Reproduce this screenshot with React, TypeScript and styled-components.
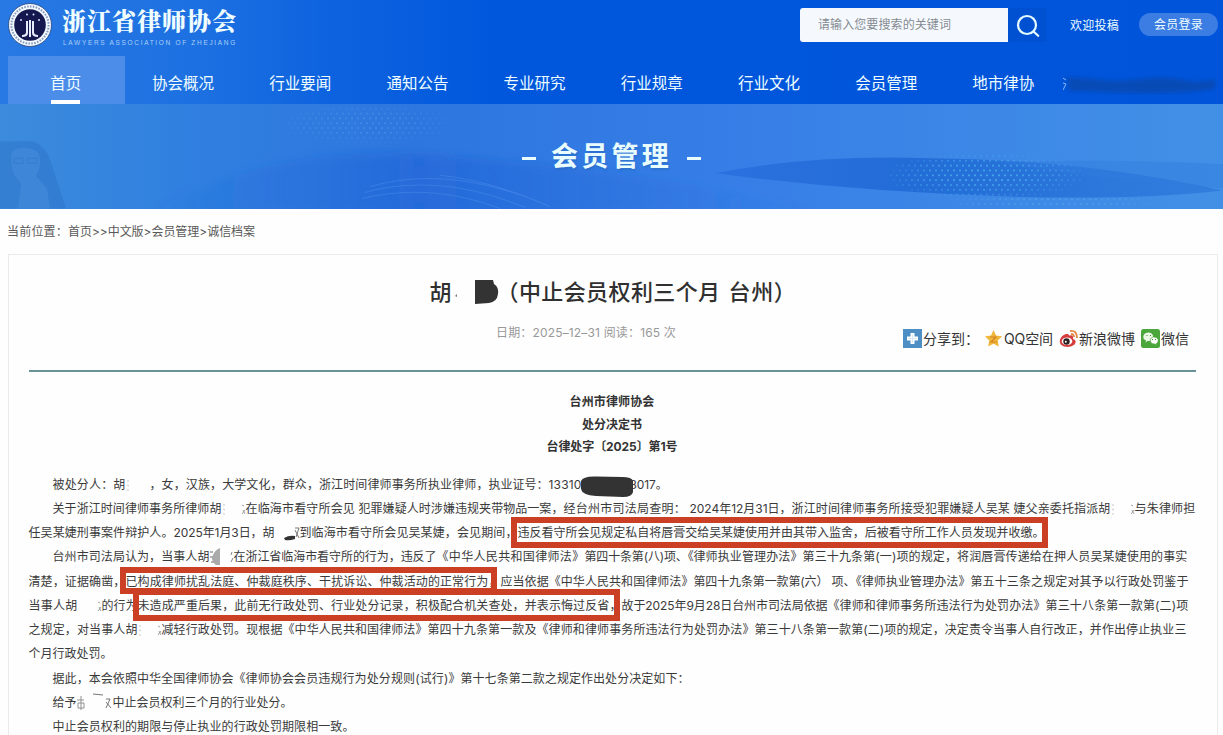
import React, { useLayoutEffect, useRef } from "react";
import styled, { createGlobalStyle, css } from "styled-components";

const GlobalStyle = createGlobalStyle`
  * { box-sizing: border-box; }
  body {
    margin: 0;
    background: #fefefe;
    color: #3a3a3a;
    font-family: Inter, "Noto Sans CJK SC", sans-serif;
    font-size: 12px;
    overflow: hidden;
  }
`;

const FitText = styled.span<{ $width: number; $gap?: number; $mark?: string }>`
  display: block;
  flex: none;
  width: ${(p) => p.$width}px;
  margin-left: ${(p) => p.$gap ?? 0}px;
  white-space: pre;
  ${(p) =>
    p.$mark &&
    css`
      position: relative;
      &::after {
        content: "";
        position: absolute;
        inset: ${p.$mark};
        border: 6px solid #cb4024;
      }
    `}
`;

type FitProps = { width: number; gap?: number; mark?: string; children: string };

/* Spreads its characters evenly over the given width. */
function Fit({ width, gap, mark, children }: FitProps) {
  const ref = useRef<HTMLSpanElement>(null);
  useLayoutEffect(() => {
    const el = ref.current;
    if (!el) return;
    el.style.letterSpacing = "0px";
    const natural = el.getBoundingClientRect().width;
    el.style.letterSpacing = `${(width - natural) / children.length}px`;
  }, [width, children]);
  return (
    <FitText $width={width} $gap={gap} $mark={mark}>
      <span ref={ref}>{children}</span>
    </FitText>
  );
}

const Page = styled.div`
  width: 1223px;
  height: 735px;
  overflow: hidden;
`;

const Header = styled.header`
  height: 104px;
  color: #effdff;
  background: linear-gradient(90deg, #2879e3 0, #1d70e1 200px, #0d63df 330px, #0057dc 500px, #0054da 100%);
`;

const TopBar = styled.div`
  display: flex;
  height: 56px;
  padding-left: 8px;
`;

const Emblem = styled.svg`
  width: 44px;
  height: 46px;
  margin-top: 2px;
`;

const Brand = styled.div`
  margin: 3px 0 0 10px;
  width: 738px;
`;

const BrandName = styled.div`
  font: 900 24px/34px "Noto Serif CJK SC", "Noto Serif SC", "Noto Sans CJK SC", serif;
`;

const BrandSub = styled.div`
  font: 6.5px/11px "Liberation Sans", sans-serif;
  color: #a9d0f8;
  padding-left: 1px;
`;

const SearchField = styled.div`
  width: 208px;
  height: 34px;
  margin-top: 8px;
  padding-left: 18px;
  border-radius: 3px 0 0 3px;
  background: #f5f9fe;
  color: #858b91;
  line-height: 34px;
  font-size: 12px;
`;

const SearchIcon = styled.svg`
  width: 38px;
  height: 34px;
  margin-top: 8px;
  background: #0051d1;
`;

const Submit = styled.div`
  margin: 9px 0 0 24px;
  line-height: 34px;
  width: 49px;
`;

const Login = styled.div`
  margin: 13px 0 0 20px;
  width: 79px;
  height: 23px;
  padding-left: 15px;
  border-radius: 12px;
  background: #3c7de3;
  line-height: 23px;
`;

const Nav = styled.nav`
  display: flex;
  height: 48px;
  padding-left: 8px;
`;

const NavItem = styled.div<{ $active?: boolean }>`
  display: flex;
  flex-direction: column;
  align-items: center;
  justify-content: space-between;
  width: 117.2px;
  padding: 12.5px 1.5px 0 0;
  flex: none;
  font-size: 15.5px;
  line-height: 29px;
  background: ${(p) => (p.$active ? "#4c8dea" : "transparent")};
`;

const ActiveBar = styled.i`
  width: 29px;
  height: 4px;
  background: #fff;
`;

const Blurred = styled.svg`
  width: 160px;
  height: 26px;
  margin-top: 15px;
`;

const Banner = styled.section`
  position: relative;
  display: flex;
  justify-content: center;
  align-items: center;
  height: 104.5px;
  background: linear-gradient(90deg, #3c8bdc 0, #3080e0 180px, #2e76df 420px, #377fe7 750px, #4290e6 100%);
  color: #e9fdff;
`;

const BannerArt = styled.svg`
  position: absolute;
  inset: 0;
  width: 100%;
  height: 100%;
`;

const BannerTitle = styled.h1`
  position: relative;
  display: flex;
  align-items: center;
  gap: 15px;
  margin: 0;
  padding-top: 2px;
  font-size: 27px;
  font-weight: 700;
  line-height: 40px;
  text-shadow: 1px 2px 2px #1d5ca655;
`;

const Dash = styled.i`
  width: 14px;
  height: 3px;
  margin-top: 2px;
  background: currentColor;
`;

const Crumb = styled.div`
  display: flex;
  height: 45.5px;
  padding-left: 7px;
  line-height: 45px;
  color: #595959;
`;

const Article = styled.main`
  width: 1210px;
  height: 500px;
  margin-left: 8px;
  padding: 0 21.5px 0 19.5px;
  border: 1px solid #e9ebe8;
`;

const Title = styled.h2`
  display: flex;
  align-items: center;
  margin: 16px 0 0 401px;
  height: 38px;
  font-size: 22px;
  font-weight: 500;
  color: #303030;
`;

const TitleBlot = styled.svg`
  width: 48px;
  height: 30px;
  flex: none;
`;

const Info = styled.div`
  display: flex;
  height: 62.5px;
  padding-left: 467.5px;
  border-bottom: 2px solid #6a9399;
  color: #999;
`;

const Meta = styled.div`
  width: 407px;
  padding-top: 12px;
  line-height: 24px;
`;

const Share = styled.div`
  display: flex;
  align-items: center;
  height: 29px;
  margin-top: 14.5px;
  font-size: 14px;
  color: #333;
`;

const ShareIcon = styled.svg<{ $gap?: number }>`
  width: 19px;
  height: 19px;
  flex: none;
  margin-left: ${(p) => p.$gap ?? 0}px;
  margin-right: 1px;
`;

const Heading = styled.div`
  display: flex;
  flex-direction: column;
  align-items: center;
  padding-top: 19.5px;
  height: 101px;
  font-weight: 700;
  line-height: 22.6px;
  color: #333;
`;

const Line = styled.p`
  display: flex;
  height: 24.27px;
  margin: 0;
  line-height: 24.27px;
  font-size: 12px;
`;

const Blot = styled.svg<{ $gap?: number; $w: number; $after?: number }>`
  flex: none;
  width: ${(p) => p.$w}px;
  height: 24px;
  overflow: visible;
  margin-left: ${(p) => p.$gap ?? 0}px;
  margin-right: ${(p) => p.$after ?? 0}px;
`;

/* The sliver of a stroke left at the edge of an erased name. */
const Trace = ({ w, left = true, right = true }: { w: number; left?: boolean; right?: boolean }) => (
  <Blot $w={w} viewBox={`0 0 ${w} 24`} fill="none" stroke="#8a8a8a" strokeWidth="0.8">
    {left && <path d="M1 8h2M1 12l2 1M1 17h2" opacity=".6" />}
    {right && <path d={`M${w - 4} 8l2 1M${w - 4} 17l3-4M${w - 3} 13l2 4`} />}
  </Blot>
);

const navItems: [string, number][] = [
  ["首页", 31],
  ["协会概况", 62],
  ["行业要闻", 62],
  ["通知公告", 62],
  ["专业研究", 62],
  ["行业规章", 62],
  ["行业文化", 62],
  ["会员管理", 62],
  ["地市律协", 62],
];

function dots(cx: number, cy: number, rx: number, ry: number, step: number) {
  const out: React.ReactElement[] = [];
  let row = 0;
  for (let y = cy - ry; y <= cy + ry; y += step * 0.8) {
    row += 1;
    for (let x = cx - rx; x <= cx + rx; x += step) {
      const d = ((x - cx) / rx) ** 2 + ((y - cy) / ry) ** 2;
      if (d < 1)
        out.push(<circle key={`${x}-${y}`} cx={x + (row % 2) * 3} cy={y} r="1.1" opacity={0.9 * (1 - d) + 0.15} />);
    }
  }
  return out;
}

export default function App() {
  return (
    <Page>
      <GlobalStyle />
      <Header>
        <TopBar>
          <Emblem viewBox="0 0 44 46">
            <circle cx="22" cy="23" r="21.5" fill="#f2f8ff" stroke="#24427c" strokeWidth=".8" />
            <circle cx="22" cy="23" r="18.6" fill="none" stroke="#8798b8" strokeWidth="2" strokeDasharray="1.6 1.3" />
            <circle cx="22" cy="23" r="15.8" fill="#14184f" />
            <path d="M18 19h2v12q0 4-6 4v-2q4 0 4-3zM21 18h2v17h-2zM24 19h2v11q0 3 4 3v2q-6 0-6-4z" fill="#e6ebfb" />
            <g fill="#dbe5ff">
              <circle cx="13" cy="18" r="1" />
              <circle cx="19" cy="12.500" r="1" />
              <circle cx="25.500" cy="12.500" r="1" />
              <circle cx="31" cy="18" r="1" />
            </g>
          </Emblem>
          <Brand>
            <BrandName>
              <Fit width={175}>浙江省律师协会</Fit>
            </BrandName>
            <BrandSub>
              <Fit width={174}>LAWYERS ASSOCIATION OF ZHEJIANG</Fit>
            </BrandSub>
          </Brand>
          <SearchField>
            <Fit width={133}>请输入您要搜索的关键词</Fit>
          </SearchField>
          <SearchIcon viewBox="0 0 38 34" fill="none" stroke="#e4fbff" strokeWidth="2.2">
            <circle cx="19" cy="17" r="9" />
            <path d="M25.500 23.500l4.700 4.300" strokeLinecap="round" />
          </SearchIcon>
          <Submit>
            <Fit width={49}>欢迎投稿</Fit>
          </Submit>
          <Login>
            <Fit width={49}>会员登录</Fit>
          </Login>
        </TopBar>
        <Nav>
          {navItems.map(([label, width], i) => (
            <NavItem key={label} $active={i === 0}>
              <Fit width={width}>{label}</Fit>
              {i === 0 && <ActiveBar />}
            </NavItem>
          ))}
          <Blurred viewBox="0 0 160 26">
            <defs>
              <filter id="soft"><feGaussianBlur stdDeviation="2" /></filter>
            </defs>
            <path d="M4 6q20 1 34 3t40-1 42 1 32-1v10q-30 4-60 4t-50-1-36-1z" fill="#0e449f" opacity=".6" filter="url(#soft)" />
            <path d="M0 7l3 2M0 12l3 1-3 6" stroke="#86b9f3" fill="none" />
          </Blurred>
        </Nav>
      </Header>

      <Banner>
        <BannerArt viewBox="0 0 1223 104" preserveAspectRatio="none">
          <defs>
            <linearGradient id="wave" x1="0" x2="1">
              <stop offset="0" stopColor="#1d5fd4" stopOpacity="0" />
              <stop offset=".4" stopColor="#1d5fd4" stopOpacity=".5" />
              <stop offset="1" stopColor="#2568d8" stopOpacity="0" />
            </linearGradient>
            <linearGradient id="leaf" x1="0" x2="1">
              <stop offset="0" stopColor="#2a6fde" />
              <stop offset=".4" stopColor="#1e68d4" />
              <stop offset="1" stopColor="#2f7bdc" />
            </linearGradient>
            <filter id="haze"><feGaussianBlur stdDeviation="5" /></filter>
          </defs>
          <path d="M150 110C230 60 330 42 450 52S690 72 820 110Z" fill="url(#wave)" filter="url(#haze)" />
          <path d="M715 69Q810 50 930 54Q1080 55 1223 86Q1130 96 1010 92Q860 88 715 69Z" fill="url(#leaf)" opacity=".85" />
          <path d="M1000 58Q1120 54 1223 60V84Q1110 77 1000 58Z" fill="#317cdd" opacity=".45" />
          <g fill="#42a5ea">{dots(985, 71, 100, 24, 6)}</g>
          <g fill="#58b3ec" opacity=".5">{dots(1050, 97, 110, 7, 6)}</g>
          <g fill="#58a9ea" opacity=".4">{dots(365, 20, 85, 20, 6)}</g>
          <g fill="none" stroke="#5c9cf0" opacity=".35">
            <path d="M370 82Q450 60 545 100M365 88Q440 68 525 103M362 94Q430 78 500 104M440 71Q490 76 550 102" />
          </g>
          <path d="M0 37h32q14 3 20 24l14 43H0z" fill="#2b71c4" opacity=".42" />
          <path d="M12 47q10-7 25 0 7 9-1 25l11 12 3 20H18l3-25Q8 66 12 47z" fill="#4a91e0" opacity=".45" />
          <path d="M14 54h9v5h-9zM28 54h9v5h-9z" fill="none" stroke="#2b71c4" opacity=".35" />
        </BannerArt>
        <BannerTitle>
          <Dash />
          <Fit width={121}>会员管理</Fit>
          <Dash />
        </BannerTitle>
      </Banner>

      <Crumb>
        <Fit width={61}>当前位置：</Fit>
        <Fit width={187}>{"首页>>中文版>会员管理>诚信档案"}</Fit>
      </Crumb>

      <Article>
        <Title>
          <Fit width={23}>胡</Fit>
          <TitleBlot viewBox="0 0 48 30">
            <path d="M2 21l2-2v3z" fill="#777" />
            <path d="M22 5h18l1 4q5 3 4 10-1 8-9 9l-14 1z" fill="#333" />
          </TitleBlot>
          <Fit width={224} gap={-4}>（中止会员权利三个月</Fit>
          <Fit width={68} gap={8}>台州）</Fit>
        </Title>
        <Info>
          <Meta>
            <Fit width={180}>日期：2025–12–31 阅读：165 次</Fit>
          </Meta>
          <Share>
            <ShareIcon viewBox="0 0 19 19">
              <path d="M0 0h19v19H0z" fill="#4d8fc5" />
              <path d="M9.500 4v11M4 9.500h11" stroke="#fff" strokeWidth="4" />
              <path d="M9.500 5.500v8M5.500 9.500h8" stroke="#d4e8f8" />
            </ShareIcon>
            <Fit width={56}>分享到：</Fit>
            <ShareIcon $gap={5} viewBox="0 0 19 19">
              <path d="M9.500 1l2.600 5.500 6 .8-4.300 4.300 1 6-5.300-2.900-5.300 2.900 1-6L1 7.300l6-.8z" fill="#f0b73d" />
              <path d="M6 8h6l-5 5h6" fill="none" stroke="#d18322" strokeWidth="1.200" />
            </ShareIcon>
            <Fit width={49}>QQ空间</Fit>
            <ShareIcon $gap={6} viewBox="0 0 19 19">
              <path d="M8 5Q4 5 1.500 9.500-1 15 5 17.500q7 1.500 10.500-2 3-4-1.500-5.500 1-5-4-3.500Q10 4.500 8 5z" fill="#d73c3d" />
              <ellipse cx="8" cy="12.300" rx="5.200" ry="3.800" fill="#fff" />
              <circle cx="7.500" cy="12.500" r="3.200" fill="#292020" />
              <circle cx="6.800" cy="12.700" r="1" fill="#fff" />
              <path d="M11 2q7-1 7 7M12 5q3 0 3 3" stroke="#e38b48" strokeWidth="1.800" fill="none" />
            </ShareIcon>
            <Fit width={56}>新浪微博</Fit>
            <ShareIcon $gap={6} viewBox="0 0 19 19">
              <rect width="19" height="19" rx="2.500" fill="#4ba63b" />
              <path d="M8 3.500c-7 0-7 7-3 8l-.5 2 2-1.500h2c5-1 5-8-.5-8.500z" fill="#e9f7e4" />
              <path d="M12.500 8c6 0 5.500 5.500 2.800 6.500l.3 1.500-1.800-1c-5.500.5-6-6.500-1.300-7z" fill="#fff" stroke="#4ba63b" strokeWidth=".7" />
              <path d="M5.500 6.500h1M9 6.500h1M11 10.500h1M14 10.500h1" stroke="#3d8c31" />
            </ShareIcon>
            <Fit width={28}>微信</Fit>
          </Share>
        </Info>

        <Heading>
          <Fit width={85}>台州市律师协会</Fit>
          <Fit width={60}>处分决定书</Fit>
          <Fit width={131}>台律处字〔2025〕第1号</Fit>
        </Heading>

        <Line>
          <Fit gap={24} width={73}>被处分人：胡</Fit>
          <Trace w={24} right={false} />
          <Fit width={339}>，女，汉族，大学文化，群众，浙江时间律师事务所执业律师，</Fit>
          <Fit width={60}>执业证号：</Fit>
          <Fit width={33}>13310</Fit>
          <Blot $w={48} viewBox="0 0 48 24">
            <path d="M-1 8Q1 3 14 3.500L40 4q10 0 11 4v11q-1 5-10 5L14 23Q0 22-1 16z" fill="#333" />
          </Blot>
          <Fit width={38}>8017。</Fit>
        </Line>
        <Line>
          <Fit gap={24} width={169}>关于浙江时间律师事务所律师胡</Fit>
          <Trace w={24} />
          <Fit width={113}>在临海市看守所会见 </Fit>
          <Fit width={205}>犯罪嫌疑人时涉嫌违规夹带物品一案，</Fit>
          <Fit width={126}>经台州市司法局查明： </Fit>
          <Fit width={102}>2024年12月31日，</Fit>
          <Fit width={222}>浙江时间律师事务所接受犯罪嫌疑人吴某 </Fit>
          <Fit width={97}>婕父亲委托指派胡</Fit>
          <Trace w={24} />
          <Fit width={61}>与朱律师担</Fit>
        </Line>
        <Line>
          <Fit width={145}>任吴某婕刑事案件辩护人。</Fit>
          <Fit width={89}>2025年1月3日，</Fit>
          <Fit width={13}>胡</Fit>
          <Blot $w={24} viewBox="0 0 24 24">
            <path d="M8 17q5-3 11-2v3q-6 2-10 1z" fill="#333" />
            <path d="M19 7h4l-3 9M19 9l4 8" fill="none" stroke="#777" />
          </Blot>
          <Fit width={218}>到临海市看守所会见吴某婕，会见期间，</Fit>
          <Fit width={527} mark="-4.5px -3px -2.5px -7px">违反看守所会见规定私自将唇膏交给吴某婕使用并由其带入监舍，后被看守所工作人员发现并收缴。</Fit>
        </Line>
        <Line>
          <Fit gap={24} width={157}>台州市司法局认为，当事人胡</Fit>
          <Blot $w={24} viewBox="0 0 24 24">
            <path d="M0 7h3M0 12h3M1 17h3" stroke="#666" />
            <path d="M10 3v17H6Q0 15 3 10q2-5 7-7z" fill="#aaa" />
            <path d="M22 7l-1 3M21 17l2-4" stroke="#888" />
          </Blot>
          <Fit width={203}>在浙江省临海市看守所的行为，违反了</Fit>
          <Fit width={148}>《中华人民共和国律师法》</Fit>
          <Fit width={109}>第四十条第(八)项、《</Fit>
          <Fit width={109}>律师执业管理办法》</Fit>
          <Fit width={385}>第三十九条第(一)项的规定，将润唇膏传递给在押人员吴某婕使用的事实</Fit>
        </Line>
        <Line>
          <Fit width={97}>清楚，证据确凿，</Fit>
          <Fit width={375} mark="-3px 3.5px 0px -6px">已构成律师扰乱法庭、仲裁庭秩序、干扰诉讼、仲裁活动的正常行为，</Fit>
          <Fit width={193}>应当依据《中华人民共和国律师法》</Fit>
          <Fit width={138}>第四十九条第一款第(六） </Fit>
          <Fit width={139}>项、《律师执业管理办法》</Fit>
          <Fit width={218}>第五十三条之规定对其予以行政处罚鉴于</Fit>
        </Line>
        <Line>
          <Fit width={49}>当事人胡</Fit>
          <Trace w={24} left={false} />
          <Fit width={36}>的行为</Fit>
          <Fit width={484} mark="-4.5px 2px -2.5px -5px">未造成严重后果，此前无行政处罚、行业处分记录，积极配合机关查处，并表示悔过反省，</Fit>
          <Fit width={206}>故于2025年9月28日台州市司法局依据</Fit>
          <Fit width={218}>《律师和律师事务所违法行为处罚办法》</Fit>
          <Fit width={143}>第三十八条第一款第(二)项</Fit>
        </Line>
        <Line>
          <Fit width={109}>之规定，对当事人胡</Fit>
          <Trace w={24} />
          <Fit width={121}>减轻行政处罚。现根据</Fit>
          <Fit width={145}>《中华人民共和国律师法》</Fit>
          <Fit width={109}>第四十九条第一款及</Fit>
          <Fit width={218}>《律师和律师事务所违法行为处罚办法》</Fit>
          <Fit width={432}>第三十八条第一款第(二)项的规定，决定责令当事人自行改正，并作出停止执业三</Fit>
        </Line>
        <Line>
          <Fit width={84}>个月行政处罚。</Fit>
        </Line>
        <Line>
          <Fit gap={24} width={181}>据此，本会依照中华全国律师协会</Fit>
          <Fit width={227}>《律师协会会员违规行为处分规则(试行)》</Fit>
          <Fit width={229}>第十七条第二款之规定作出处分决定如下：</Fit>
        </Line>
        <Line>
          <Fit gap={24} width={24}>给予</Fit>
          <Blot $w={36} viewBox="0 0 36 24">
            <path d="M0 9h7M4 5v14M1 12h6v5H1z" fill="none" stroke="#888" strokeWidth=".9" />
            <path d="M16 3l10 1" stroke="#777" />
            <path d="M29 8h4l-4 9M29 11l5 6" fill="none" stroke="#777" />
          </Blot>
          <Fit width={180}>中止会员权利三个月的行业处分。</Fit>
        </Line>
        <Line>
          <Fit gap={24} width={302}>中止会员权利的期限与停止执业的行政处罚期限相一致。</Fit>
        </Line>
      </Article>
    </Page>
  );
}
